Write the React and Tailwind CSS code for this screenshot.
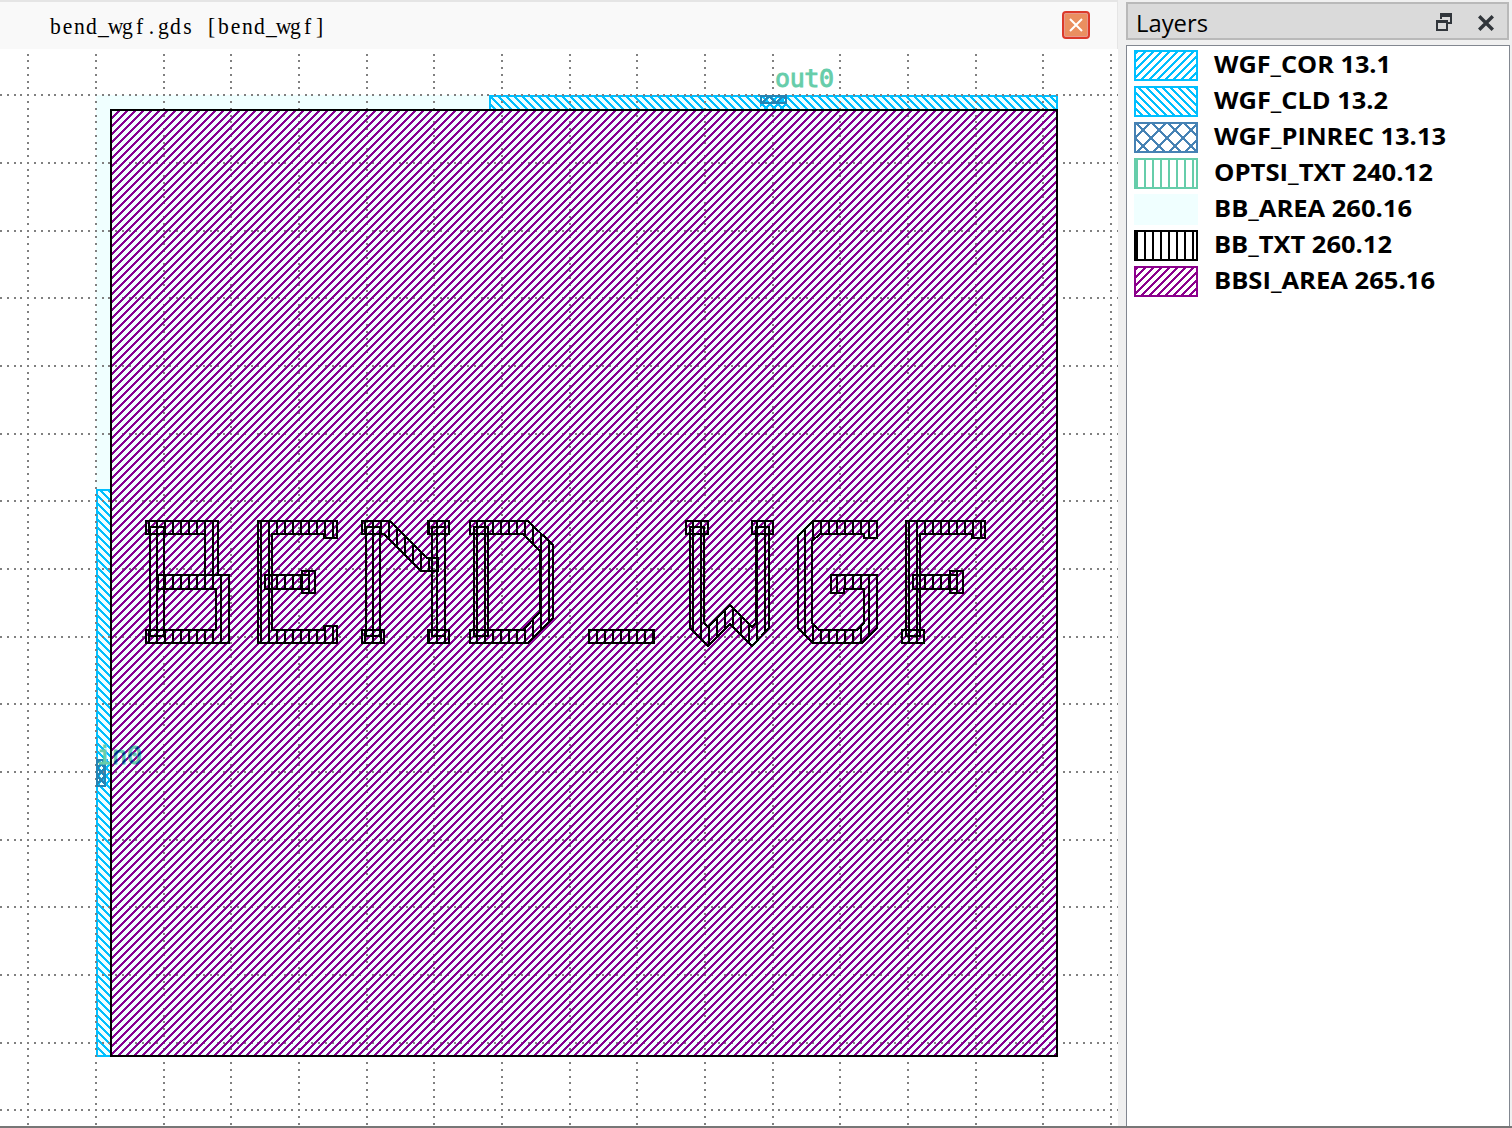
import React from "react";

const PERIOD = 8;

/* Parallelograms three pixels wide, eight apart, covering a rectangle. */
function stripes(dir, phase, x1, y1, x2, y2, width = 3) {
  const h = y2 - y1;
  let d = "";
  if (dir === "slash") {
    for (let s = Math.floor((x1 + y1) / PERIOD) * PERIOD - PERIOD + phase; s < x2 + y2; s += PERIOD) {
      d += `M${s - y1} ${y1}h${width}l${-h} ${h}h${-width}z`;
    }
  } else {
    for (let s = Math.floor((x1 - y2) / PERIOD) * PERIOD - PERIOD + phase; s < x2 - y1; s += PERIOD) {
      d += `M${s + y1} ${y1}h${width}l${h} ${h}h${-width}z`;
    }
  }
  return d;
}

function Hatch({ id, dir, phase = 0, box, color, width }) {
  const [x1, y1, x2, y2] = box;
  return (
    <g>
      <clipPath id={id}>
        <rect x={x1} y={y1} width={x2 - x1} height={y2 - y1} />
      </clipPath>
      <path clipPath={`url(#${id})`} d={stripes(dir, phase, x1, y1, x2, y2, width)} fill={color} shapeRendering="crispEdges" />
    </g>
  );
}

const X0 = 27.2;
const Y0 = 94.2;
const STEP = 67.68;
const DOT = STEP / 10;

function gridPath() {
  let d = "";
  for (let i = -1; i <= 16; i++) {
    const x = Math.round(X0 + i * STEP);
    for (let k = -6; k < 154; k++) d += `M${x} ${Math.round(Y0 + k * DOT)}h2v2h-2z`;
  }
  for (let j = 0; j <= 15; j++) {
    const y = Math.round(Y0 + j * STEP);
    for (let k = -4; k < 162; k++) d += `M${Math.round(X0 + k * DOT)} ${y}h2v2h-2z`;
  }
  return d;
}
const GRID = gridPath();

const rect = (x1, y1, x2, y2) => [[x1, y1], [x2, y1], [x2, y2], [x1, y2]];

/* Outlines of the lettering, in thirds of a pixel from each group's origin. */
const LETTERS = [
  [130, 500, [
    [[48, 63], [264, 63], [264, 225], [225, 225], [225, 102], [48, 102]],
    rect(60, 81, 102, 408),
    [[84, 225], [297, 225], [297, 429], [48, 429], [48, 390], [258, 390], [258, 267], [84, 267]],
    [[384, 63], [621, 63], [621, 114], [582, 114], [582, 102], [426, 102], [426, 390], [582, 390], [582, 378], [621, 378], [621, 429], [384, 429]],
    rect(405, 225, 537, 267),
    rect(516, 213, 555, 279),
  ]],
  [340, 500, [
    [[66, 63], [150, 63], [261, 174], [294, 174], [294, 213], [243, 213], [132, 102], [66, 102]],
    rect(78, 81, 120, 408),
    rect(66, 390, 132, 429),
    rect(264, 63, 327, 102),
    rect(276, 81, 315, 408),
    rect(264, 390, 327, 429),
    [[390, 63], [564, 63], [639, 135], [639, 354], [564, 429], [390, 429], [390, 390], [549, 390], [600, 336], [600, 153], [549, 102], [390, 102]],
    rect(402, 81, 444, 408),
  ]],
  [570, 500, [
    rect(57, 390, 252, 429),
    rect(348, 63, 414, 102),
    rect(546, 63, 609, 102),
    [[360, 81], [402, 81], [402, 369], [414, 381], [480, 315], [546, 381], [558, 369], [558, 81], [597, 81], [597, 384], [546, 438], [480, 372], [414, 438], [360, 384]],
  ]],
  [780, 500, [
    [[99, 63], [291, 63], [291, 114], [252, 114], [252, 102], [120, 102], [96, 123], [96, 369], [117, 390], [231, 390], [252, 369], [252, 267], [192, 267], [192, 279], [153, 279], [153, 225], [291, 225], [291, 384], [246, 429], [99, 429], [54, 384], [54, 108]],
    [[378, 63], [615, 63], [615, 114], [576, 114], [576, 102], [420, 102], [420, 408], [378, 408]],
    rect(366, 390, 432, 429),
    rect(399, 225, 531, 267),
    rect(510, 213, 549, 279),
  ]],
];

const PORT = "font-['DejaVu_Sans_Mono',monospace] text-[25px]";

function Canvas() {
  return (
    <svg className="block h-[1077px] w-[1118px] bg-white" viewBox="0 49 1118 1077">
      <defs>
        <pattern id="txt" width="8" height="8" patternUnits="userSpaceOnUse">
          <rect x="4" width="2" height="8" fill="#000" shapeRendering="crispEdges" />
        </pattern>
        <pattern id="portInk" width="8" height="8" patternUnits="userSpaceOnUse">
          <path d="M4 0h3l-7 7v-3zM12 0h3l-8 8h-3z" fill="#00208b" />
        </pattern>
        <clipPath id="insideBox">
          <rect x="112" y="700" width="60" height="100" />
        </clipPath>
      </defs>
      <g shapeRendering="crispEdges">
        <rect x="96" y="95" width="962" height="962" fill="#f0ffff" />
        <Hatch id="cldTop" dir="back" phase={0} box={[490, 96, 1057, 110]} color="#00bfff" />
        <Hatch id="cldLeft" dir="back" phase={0} box={[97, 490, 111, 1056]} color="#00bfff" />
        <rect x="490" y="96" width="567" height="14" fill="none" stroke="#00bfff" strokeWidth="2" />
        <rect x="97" y="490" width="14" height="566" fill="none" stroke="#00bfff" strokeWidth="2" />
        <Hatch id="corTop" dir="slash" phase={0} box={[760, 95, 787, 110]} color="#00bfff" />
        <Hatch id="corLeft" dir="slash" phase={0} box={[96, 759, 111, 787]} color="#00bfff" />
        <path d={GRID} fill="#808080" />
        <g stroke="#2384b5" strokeWidth="2" fill="none">
          <rect x="761" y="96" width="25" height="7" />
          <path d="M762 103L769 96L776 103L783 96L786 99" />
          <rect x="97" y="760" width="8" height="26" />
          <path d="M97 760L105 768L97 776L105 784M105 760L97 768L105 776L97 784" />
        </g>
        <Hatch id="bbsi" dir="slash" phase={4} box={[111, 110, 1057, 1056]} color="#860090" />
      </g>
      <g className={PORT} fill="#66cdaa" stroke="#66cdaa" strokeWidth=".9">
        <text x="775" y="87" textLength="59">out0</text>
        <text x="97" y="764">in0</text>
      </g>
      <g clipPath="url(#insideBox)">
        <text className={PORT} x="97" y="764" fill="url(#portInk)" stroke="url(#portInk)" strokeWidth=".9" aria-hidden="true">in0</text>
      </g>
      <g shapeRendering="crispEdges" stroke="#000" strokeWidth="2">
        <rect x="111" y="110" width="946" height="946" fill="none" />
        {LETTERS.map(([ox, oy, shapes]) =>
          shapes.map((pts, i) => (
            <polygon
              key={`${ox}-${i}`}
              points={pts.map(([x, y]) => `${ox + x / 3},${oy + y / 3}`).join(" ")}
              fill="url(#txt)"
            />
          ))
        )}
      </g>
    </svg>
  );
}

const LAYERS = [
  { name: "WGF_COR 13.1", color: "#00bfff", kind: "slash", w: 177 },
  { name: "WGF_CLD 13.2", color: "#00bfff", kind: "back", w: 174 },
  { name: "WGF_PINREC 13.13", color: "#4682b4", kind: "cross", w: 232 },
  { name: "OPTSI_TXT 240.12", color: "#66cdaa", kind: "bars", w: 219 },
  { name: "BB_AREA 260.16", color: "#f0ffff", kind: "solid", w: 198 },
  { name: "BB_TXT 260.12", color: "#000000", kind: "bars", w: 178 },
  { name: "BBSI_AREA 265.16", color: "#8b008b", kind: "slash", w: 221 },
];

function Swatch({ kind, color, index }) {
  const id = `sw${index}`;
  const box = [1, 1, 63, 30];
  return (
    <svg className="block h-[31px] w-16 shrink-0" viewBox="0 0 64 31" shapeRendering="crispEdges">
      {kind === "slash" && <Hatch id={id} dir="slash" phase={3} box={box} color={color} />}
      {kind === "back" && <Hatch id={id} dir="back" phase={1} box={box} color={color} />}
      {kind === "bars" && <path d="M2 1h2v29h-2zM10 1h2v29h-2zM18 1h2v29h-2zM26 1h2v29h-2zM34 1h2v29h-2zM42 1h2v29h-2zM50 1h2v29h-2zM58 1h2v29h-2z" fill={color} />}
      {kind === "cross" && (
        <path
          d="M1 0L33 32M17 0L49 32M33 0L65 32M49 0L65 16M1 16L17 32M17 0L1 16M33 0L1 32M49 0L17 32M65 0L33 32M65 16L49 32"
          fill="none"
          stroke={color}
          strokeWidth="2"
        />
      )}
      <rect x="1" y="1" width="62" height="29" fill={kind === "solid" ? color : "none"} stroke={color} strokeWidth="2" />
    </svg>
  );
}

function Label({ text, width }) {
  return (
    <svg className="ml-4 block h-9 w-[260px] overflow-visible font-['Open_Sans','Noto_Sans',sans-serif] text-[24px] font-bold">
      <text x="0" y="23" textLength={width} lengthAdjust="spacingAndGlyphs">{text}</text>
    </svg>
  );
}

const TITLE = "bend_wgf.gds [bend_wgf]";
const TITLE_X = Array.from(TITLE, (_, i) => ((5.5 + i * 12) / 0.9).toFixed(2)).join(" ");

export default function App() {
  return (
    <div className="flex h-[1128px] w-[1512px] flex-col overflow-hidden bg-[#f0f0f0] text-black">
      <div className="flex h-[1126px]">
        <div className="flex w-[1118px] flex-col">
          <div className="flex h-[49px] items-start justify-between border-t-2 border-r border-[#e5e5e5] bg-[#f9f9f9] pt-[9px] pr-[27px] pl-[50px]">
            <svg className="block h-8 w-[276px] overflow-visible font-['Liberation_Serif',serif] text-[24px]">
              <text x={TITLE_X} y="23" textAnchor="middle" transform="scale(.9 1)" xmlSpace="preserve">{TITLE}</text>
            </svg>
            <svg className="block size-7" viewBox="0 0 28 28">
              <rect x="1" y="1" width="26" height="26" rx="3" fill="#e9967a" stroke="#dc3a2a" strokeWidth="2" />
              <rect x="2.5" y="2.5" width="23" height="23" rx="1.5" fill="#ea8f60" stroke="#e8988c" />
              <path d="M8 8L20 20M20 8L8 20" stroke="#fff" strokeWidth="2" />
            </svg>
          </div>
          <Canvas />
        </div>
        <div className="ml-2 flex w-[384px] flex-col pt-0.5">
          <div className="flex h-[38px] w-[383px] items-center border-2 border-[#b9b9b9] bg-[#dadada] pt-0.5 pl-2">
            <svg className="block h-8 w-[80px] overflow-visible font-['Open_Sans','Noto_Sans',sans-serif] text-[24px]">
              <text x="0" y="26" textLength="72" lengthAdjust="spacingAndGlyphs">Layers</text>
            </svg>
            <svg className="ml-[220px] block h-[18px] w-4" viewBox="0 0 16 18" fill="none" stroke="#31363b" shapeRendering="crispEdges">
              <path d="M5 6V1H15V10H12" strokeWidth="2" />
              <path d="M4 2H16" strokeWidth="4" />
              <rect x="1" y="8" width="10" height="9" strokeWidth="2" />
              <path d="M0 8.5H12" strokeWidth="3" />
            </svg>
            <svg className="mt-0.5 ml-[26px] block size-4" viewBox="0 0 16 16" stroke="#31363b" strokeWidth="3.4">
              <path d="M1.2 1.2L14.8 14.8M14.8 1.2L1.2 14.8" />
            </svg>
          </div>
          <div className="mt-[5px] flex-1 border border-b-0 border-[#828790] bg-white pt-1 pl-[7px]">
            {LAYERS.map((l, i) => (
              <div key={l.name} className="flex h-9 items-start">
                <Swatch kind={l.kind} color={l.color} index={i} />
                <Label text={l.name} width={l.w} />
              </div>
            ))}
          </div>
        </div>
      </div>
      <div className="h-0.5 bg-[#777777]" />
    </div>
  );
}
